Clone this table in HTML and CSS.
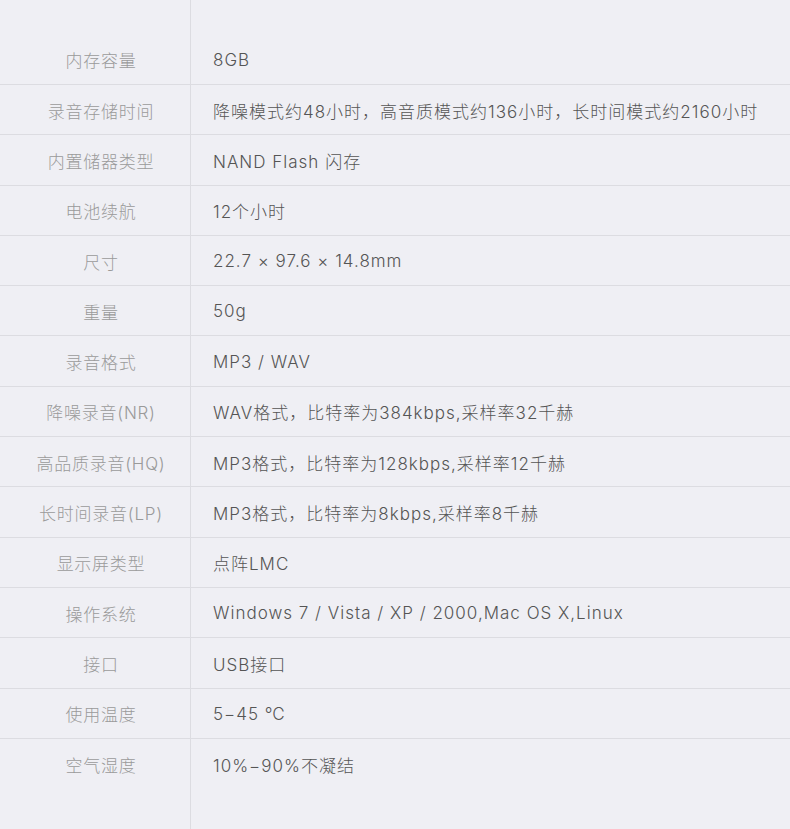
FILE: index.html
```html
<html>
  <head>
    <title>规格参数</title>
    <link rel="stylesheet" href="styles.css">
  </head>
  <body>
    <main class="specs">
      <div class="spacer"><span class="spec-label"></span></div>
      <div class="spec-row">
        <span class="spec-label">内存容量</span>
        <span class="spec-value">8GB</span>
      </div>
      <div class="spec-row">
        <span class="spec-label">录音存储时间</span>
        <span class="spec-value">降噪模式约48小时，高音质模式约136小时，长时间模式约2160小时</span>
      </div>
      <div class="spec-row">
        <span class="spec-label">内置储器类型</span>
        <span class="spec-value">NAND Flash 闪存</span>
      </div>
      <div class="spec-row">
        <span class="spec-label">电池续航</span>
        <span class="spec-value">12个小时</span>
      </div>
      <div class="spec-row">
        <span class="spec-label">尺寸</span>
        <span class="spec-value">22.7 × 97.6 × 14.8mm</span>
      </div>
      <div class="spec-row">
        <span class="spec-label">重量</span>
        <span class="spec-value">50g</span>
      </div>
      <div class="spec-row">
        <span class="spec-label">录音格式</span>
        <span class="spec-value">MP3 / WAV</span>
      </div>
      <div class="spec-row">
        <span class="spec-label">降噪录音(NR)</span>
        <span class="spec-value">WAV格式，比特率为384kbps,采样率32千赫</span>
      </div>
      <div class="spec-row">
        <span class="spec-label">高品质录音(HQ)</span>
        <span class="spec-value">MP3格式，比特率为128kbps,采样率12千赫</span>
      </div>
      <div class="spec-row">
        <span class="spec-label">长时间录音(LP)</span>
        <span class="spec-value">MP3格式，比特率为8kbps,采样率8千赫</span>
      </div>
      <div class="spec-row">
        <span class="spec-label">显示屏类型</span>
        <span class="spec-value">点阵LMC</span>
      </div>
      <div class="spec-row">
        <span class="spec-label">操作系统</span>
        <span class="spec-value">Windows 7 / Vista / XP / 2000,Mac OS X,Linux</span>
      </div>
      <div class="spec-row">
        <span class="spec-label">接口</span>
        <span class="spec-value">USB接口</span>
      </div>
      <div class="spec-row">
        <span class="spec-label">使用温度</span>
        <span class="spec-value">5−45 ℃</span>
      </div>
      <div class="spec-row">
        <span class="spec-label">空气湿度</span>
        <span class="spec-value">10%−90%不凝结</span>
      </div>
      <div class="spacer spacer-end"><span class="spec-label"></span></div>
    </main>
  </body>
</html>
```

FILE: styles.css
```css
html,
body {
  padding: 0;
  margin: 0;
  font-family: Inter, "Noto Sans CJK SC", sans-serif;
}

body {
  background: #efeff4;
  color: #555;
}

.specs {
  display: flex;
  flex-direction: column;
  min-height: 100vh;
}

.spacer {
  display: flex;
  height: 34px;
}

.spacer-end {
  flex: 1;
}

.spec-row {
  display: flex;
  align-items: stretch;
  height: 50.3px;
  box-sizing: border-box;
  border-top: 1px solid #dcdce1;
  font-size: 17px;
  font-weight: 300;
}

.spacer + .spec-row {
  height: 50px;
  border-top: none;
}

.spec-label {
  display: flex;
  align-items: center;
  justify-content: center;
  width: 191px;
  flex-shrink: 0;
  box-sizing: border-box;
  padding-left: 12px;
  padding-top: 1px;
  border-right: 1px solid #dcdce1;
  color: #9a9a9a;
  letter-spacing: 0.75px;
}

.spec-value {
  display: flex;
  align-items: center;
  padding-left: 22px;
  padding-top: 1px;
  color: #555;
  white-space: nowrap;
  letter-spacing: 1px;
}
```
